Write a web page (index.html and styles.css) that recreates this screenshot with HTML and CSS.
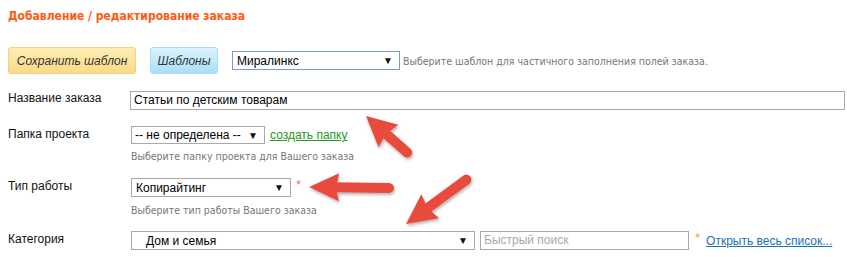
FILE: index.html
```html
<!DOCTYPE html>
<html lang="ru">
<head>
<meta charset="utf-8">
<link rel="stylesheet" href="styles.css">
</head>
<body>
<div class="page">
  <h1 class="title">Добавление / редактирование заказа</h1>
  <div class="toolbar">
    <span class="btn btn-yellow">Сохранить шаблон</span>
    <span class="btn btn-blue">Шаблоны</span>
    <div class="sel sel-tpl"><span class="sel-text">Миралинкс</span><span class="sel-arrow">▼</span></div>
    <span class="hint hint-inline">Выберите шаблон для частичного заполнения полей заказа.</span>
  </div>

  <div class="row row-name">
    <div class="label">Название заказа</div>
    <div class="field"><div class="input input-name">Статьи по детским товарам</div></div>
  </div>

  <div class="row row-folder">
    <div class="label">Папка проекта</div>
    <div class="field">
      <div class="line">
        <div class="sel sel-folder"><span class="sel-text">-- не определена --</span><span class="sel-arrow">▼</span></div>
        <a class="link link-green">создать папку</a>
      </div>
      <div class="hint">Выберите папку проекта для Вашего заказа</div>
    </div>
  </div>

  <div class="row row-type">
    <div class="label">Тип работы</div>
    <div class="field">
      <div class="line">
        <div class="sel sel-type"><span class="sel-text">Копирайтинг</span><span class="sel-arrow">▼</span></div>
        <span class="req req-red">*</span>
      </div>
      <div class="hint">Выберите тип работы Вашего заказа</div>
    </div>
  </div>

  <div class="row row-cat">
    <div class="label">Категория</div>
    <div class="field">
      <div class="line">
        <div class="sel sel-cat"><span class="sel-text">Дом и семья</span><span class="sel-arrow">▼</span></div>
        <div class="input input-search">Быстрый поиск</div>
        <span class="req req-orange">*</span>
        <a class="link link-blue">Открыть весь список...</a>
      </div>
    </div>
  </div>

  <svg class="arrows" width="847" height="257" viewBox="0 0 847 257">
    <defs>
      <filter id="sh" x="-30%" y="-30%" width="160%" height="160%">
        <feDropShadow dx="1" dy="2" stdDeviation="1.5" flood-color="#000" flood-opacity="0.3"/>
      </filter>
    </defs>
    <g filter="url(#sh)" fill="#e84c3d" stroke="#e84c3d">
      <g transform="translate(366,116) rotate(41.6)">
        <polygon points="0,0 30,-15 27,0 30,15" stroke="none"/>
        <line x1="24" y1="0" x2="55" y2="0" stroke-width="10" stroke-linecap="round"/>
      </g>
      <g transform="translate(309,187) rotate(0.7)">
        <polygon points="0,0 30,-14 27,0 30,14" stroke="none"/>
        <line x1="24" y1="0" x2="80" y2="0" stroke-width="10" stroke-linecap="round"/>
      </g>
      <g transform="translate(406,224) rotate(-36.3)">
        <polygon points="0,0 30,-15 27,0 30,15" stroke="none"/>
        <line x1="24" y1="0" x2="75" y2="0" stroke-width="10" stroke-linecap="round"/>
      </g>
    </g>
  </svg>
</div>
</body>
</html>
```
FILE: styles.css
```css
* { box-sizing: border-box; }
html, body { margin: 0; padding: 0; background: #fff; }
body { font-family: "Liberation Sans", Arial, sans-serif; font-size: 12px; color: #000; }
.page { position: relative; width: 847px; height: 257px; overflow: hidden; padding: 0 0 0 8px; white-space: nowrap; }

.title {
  margin: 0; padding-top: 8px; height: 47px;
  font-family: "DejaVu Sans Condensed", "DejaVu Sans", sans-serif;
  font-weight: bold; font-size: 12px; color: #ff5a10; line-height: 16px;
}

.toolbar { display: flex; align-items: center; height: 27px; }
.btn {
  display: inline-flex; align-items: center; justify-content: center;
  height: 27px; border-radius: 3px; font-style: italic; font-size: 12px; color: #333;
}
.btn-yellow {
  width: 128px; border: 1px solid #f5cf7a;
  background: linear-gradient(#feeeb4, #fcd987);
}
.btn-blue {
  width: 68px; margin-left: 14px; border: 1px solid #a8dcf6;
  background: linear-gradient(#dcf3fe, #a9defa);
}

.sel {
  display: flex; align-items: center; justify-content: space-between;
  height: 19px; border: 1px solid #a9a9a9; background: #fff;
  padding: 0 6px 0 4px; font-size: 12px; color: #000;
}
.sel-arrow { font-size: 10px; color: #111; }
.sel-tpl { width: 168px; margin-left: 14px; border-color: #7b9bd0; }
.sel-folder { width: 134px; height: 18px; padding-left: 3px; }
.sel-type { width: 160px; }
.sel-cat { width: 344px; padding-left: 14px; }

.hint {
  font-family: "DejaVu Sans Condensed", "DejaVu Sans", sans-serif;
  font-size: 10.5px; color: #777; line-height: 13px;
}
.hint-inline { margin-left: 3px; margin-top: 2px; }

.row { display: flex; }
.label { width: 123px; flex: none; font-size: 12px; color: #111; padding-top: 1px; }
.field { flex: 1; }
.line { display: flex; align-items: center; }

.row-name { margin-top: 17px; }
.row-name .label { padding-top: 0; }
.input {
  height: 19px; border: 1px solid #a9a9a9; background: #fff;
  padding: 0 3px; font-size: 12px; line-height: 17px; color: #000;
}
.input-name { width: 715px; margin-left: -1px; }

.row-folder { margin-top: 16px; }
.row-folder .hint { margin-top: 6px; }
.link { text-decoration: underline; font-size: 12px; margin-left: 5px; }
.link-green { color: #219a21; }
.link-blue { color: #1771b5; margin-left: 6px; }

.row-type { margin-top: 15px; }
.row-type .hint { margin-top: 7px; }
.req { font-size: 13px; margin-left: 5px; align-self: flex-start; line-height: 14px; }
.req-red { color: #f07878; }
.req-orange { color: #f0a040; margin-left: 6px; }

.row-cat { margin-top: 14px; }
.input-search { width: 209px; margin-left: 5px; color: #a9a9a9; }

.arrows { position: absolute; left: 0; top: 0; pointer-events: none; }
```
